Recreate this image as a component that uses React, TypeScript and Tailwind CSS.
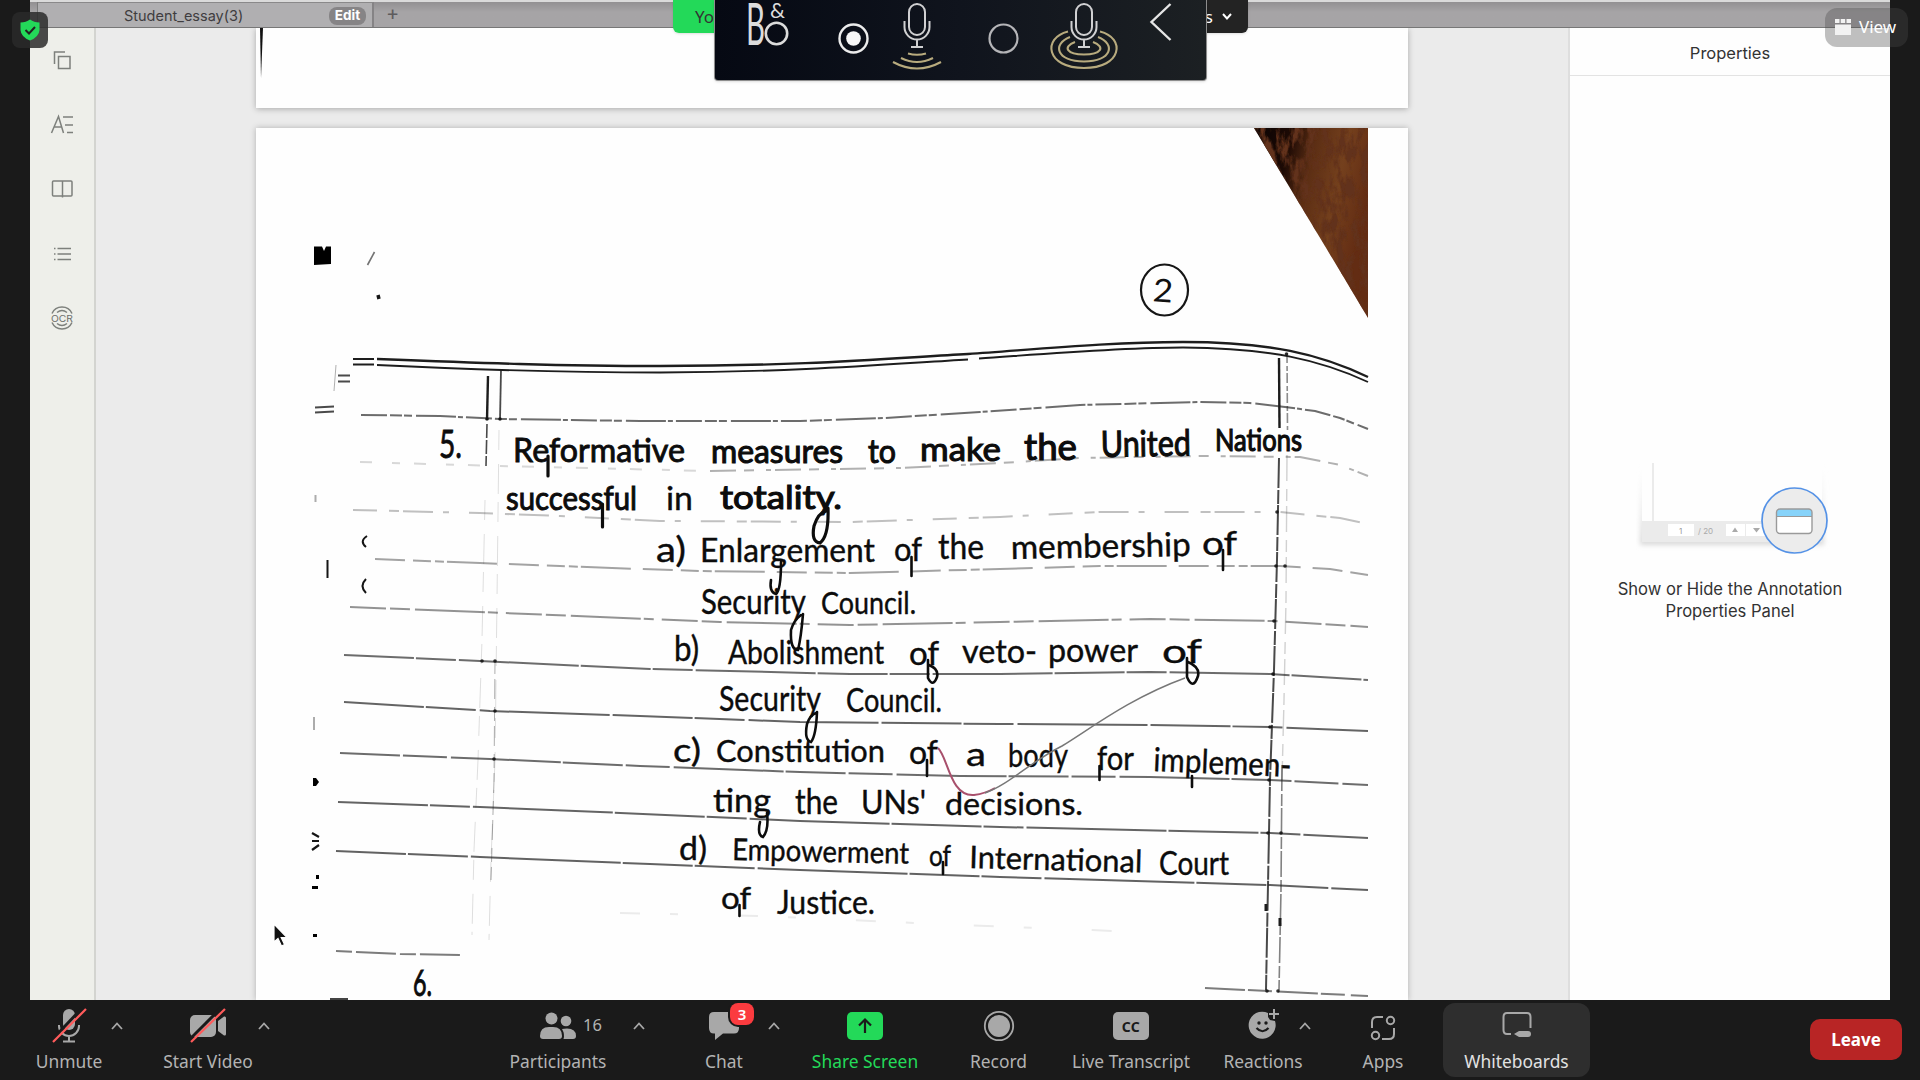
import React from 'react';

type Word = { t: string; x: number; y: number; w: number; s?: number; r?: number; b?: number };

/* The handwritten essay, word by word. */
const words: Word[] = [
  { t: '5.', x: 439, y: 458, w: 23, s: 38, b: 0.8 },
  { t: 'Reformative', x: 513, y: 462, w: 172, b: 0.9 },
  { t: 'measures', x: 711, y: 463, w: 132, b: 1.1 },
  { t: 'to', x: 868, y: 463, w: 28, b: 1.1 },
  { t: 'make', x: 920, y: 461, w: 81, b: 1.1 },
  { t: 'the', x: 1024, y: 460, w: 53, b: 1.2, s: 37 },
  { t: 'United', x: 1101, y: 457, w: 90, b: 1.1, r: -1, s: 36 },
  { t: 'Nations', x: 1215, y: 451, w: 87, b: 1.2, s: 30 },
  { t: 'successful', x: 506, y: 510, w: 131, b: 1 },
  { t: 'in', x: 666, y: 510, w: 27 },
  { t: 'totality.', x: 720, y: 509, w: 122, b: 1.2, s: 33 },
  { t: 'a)', x: 656, y: 562, w: 30, s: 35 },
  { t: 'Enlargement', x: 700, y: 562, w: 175 },
  { t: 'of', x: 894, y: 561, w: 28 },
  { t: 'the', x: 938, y: 559, w: 46, s: 34 },
  { t: 'membership', x: 1011, y: 559, w: 180, r: -1 },
  { t: 'of', x: 1202, y: 555, w: 35 },
  { t: 'Security', x: 701, y: 614, w: 105, s: 34 },
  { t: 'Council.', x: 821, y: 614, w: 95, s: 31 },
  { t: 'b)', x: 674, y: 661, w: 25, s: 34 },
  { t: 'Abolishment', x: 728, y: 664, w: 156 },
  { t: 'of', x: 909, y: 665, w: 30 },
  { t: 'veto-', x: 962, y: 663, w: 75 },
  { t: 'power', x: 1048, y: 662, w: 90 },
  { t: 'of', x: 1162, y: 663, w: 40 },
  { t: 'Security', x: 719, y: 711, w: 102, s: 34 },
  { t: 'Council.', x: 846, y: 712, w: 96, s: 32 },
  { t: 'c)', x: 673, y: 762, w: 28 },
  { t: 'Constitution', x: 716, y: 762, w: 169, s: 30 },
  { t: 'of', x: 909, y: 764, w: 29 },
  { t: 'a', x: 966, y: 766, w: 20 },
  { t: 'body', x: 1008, y: 767, w: 60 },
  { t: 'for', x: 1097, y: 770, w: 37 },
  { t: 'implemen-', x: 1153, y: 771, w: 138, r: 2.5 },
  { t: 'ting', x: 713, y: 812, w: 58 },
  { t: 'the', x: 795, y: 814, w: 43, s: 34 },
  { t: "UNs'", x: 861, y: 814, w: 65 },
  { t: 'decisions.', x: 945, y: 815, w: 138, s: 31 },
  { t: 'd)', x: 679, y: 860, w: 28 },
  { t: 'Empowerment', x: 732, y: 860, w: 177, s: 30, r: 1.2 },
  { t: 'of', x: 929, y: 866, w: 22, s: 28 },
  { t: 'International', x: 969, y: 868, w: 173, s: 31, r: 1.5 },
  { t: 'Court', x: 1159, y: 875, w: 70, s: 32 },
  { t: 'of', x: 721, y: 909, w: 30, s: 30 },
  { t: 'Justice.', x: 777, y: 914, w: 98, s: 33 },
  { t: '6.', x: 413, y: 996, w: 19, s: 36, b: 1 },
];

type Pt = [number, number];
const rules: { p: Pt[]; o: number; d: string }[] = [
  { o: 0.62, d: '26 3 12 2 8 4 40 2 5 3', p: [[361, 415], [440, 416], [500, 419], [640, 421], [800, 421], [885, 418], [980, 412], [1080, 405], [1200, 402], [1250, 403], [1285, 407], [1315, 411], [1340, 418], [1368, 429]] },
  { o: 0.16, d: '12 20 8 14', p: [[360, 462], [500, 466], [710, 471]] },
  { o: 0.32, d: '26 8 10 12 5 4', p: [[710, 471], [900, 468], [1000, 463], [1080, 458], [1200, 456], [1300, 457], [1340, 465], [1368, 476]] },
  { o: 0.26, d: '24 12 10 4 30 10 6 20', p: [[353, 510], [480, 513], [560, 516], [660, 521], [850, 522], [1000, 517], [1100, 512], [1280, 512], [1340, 518], [1368, 524]] },
  { o: 0.38, d: '30 8 18 4 9 3 50 12', p: [[375, 559], [480, 563], [560, 566], [640, 569], [700, 571], [850, 573], [1000, 569], [1100, 566], [1280, 566], [1330, 569], [1368, 575]] },
  { o: 0.45, d: '36 4 20 5 70 3 10 8', p: [[350, 607], [480, 612], [600, 617], [720, 622], [850, 625], [1000, 622], [1150, 619], [1275, 621], [1368, 627]] },
  { o: 0.62, d: '70 2 40 3 120 2', p: [[344, 655], [480, 661], [650, 669], [850, 674], [1000, 674], [1150, 672], [1270, 674], [1368, 680]] },
  { o: 0.65, d: '80 2 50 4 130 3', p: [[344, 702], [490, 711], [640, 716], [800, 722], [1000, 724], [1150, 725], [1270, 727], [1368, 731]] },
  { o: 0.62, d: '60 3 44 4 110 2', p: [[340, 753], [490, 759], [640, 766], [800, 772], [960, 776], [1150, 777], [1270, 780], [1368, 785]] },
  { o: 0.65, d: '90 2 40 3 140 2', p: [[338, 802], [480, 807], [600, 812], [800, 821], [1000, 827], [1270, 833], [1368, 838]] },
  { o: 0.66, d: '70 2 60 3 150 2', p: [[336, 851], [480, 857], [650, 864], [800, 870], [1000, 877], [1270, 885], [1368, 890]] },
  { o: 0.55, d: '16 4 40 4', p: [[336, 951], [400, 954], [460, 955]] },
  { o: 0.55, d: '40 3 24 6', p: [[1205, 988], [1268, 991], [1368, 996]] },
  { o: 0.08, d: '20 30 8 60', p: [[620, 913], [760, 916], [960, 925], [1140, 932]] },
];

function EssayScan() {
  return (
    <svg width="1152" height="872" viewBox="256 128 1152 872" className="block">
      <defs>
        <linearGradient id="desk" x1="0" y1="0" x2="1" y2="0.35">
          <stop offset="0" stopColor="#080303" />
          <stop offset="0.3" stopColor="#1d0a05" />
          <stop offset="0.5" stopColor="#5c2e14" />
          <stop offset="0.75" stopColor="#74401d" />
          <stop offset="1" stopColor="#632c13" />
        </linearGradient>
        <filter id="grain" x="0" y="0" width="1" height="1">
          <feTurbulence type="fractalNoise" baseFrequency="0.13 0.05" numOctaves="5" seed="7" />
          <feColorMatrix values="0 0 0 0 0.12  0 0 0 0 0.03  0 0 0 0 0.01  4 0 0 0 -1.6" />
          <feComposite in2="SourceGraphic" operator="in" />
        </filter>
      </defs>
      <path d="M1254 128H1368V318L1340 271L1305 213Z" fill="url(#desk)" />
      <path d="M1254 128H1368V318L1340 271L1305 213Z" filter="url(#grain)" />

      <g fill="none" stroke="#1d1d1d" strokeWidth="1.900">
        <path d="M353 359H374M353 364.500H374" />
        <path strokeWidth="2.400" d="M377 359C480 363 560 366 660 366C800 366 880 359 968 354C1040 349 1110 342 1183 342C1270 342 1320 354 1368 377" />
        <path d="M377 365C480 370 560 372.500 660 372.500C800 372 890 364 968 359.500M979 358.500C1050 353.500 1120 347.500 1183 347.500C1270 348 1320 360 1368 382" />
        <path strokeWidth="1.800" opacity=".8" d="M338 375.500H350M338 381.500H350M315 407.500L334 406.500M315 412.500L334 411.500" />
        <path strokeWidth="1" opacity=".35" d="M336 365L334 391" />
      </g>

      {rules.map((l, i) => (
        <polyline key={i} points={l.p.map((q) => q.join(',')).join(' ')} fill="none" stroke="#111" strokeWidth="2" strokeDasharray={l.d} opacity={l.o} strokeLinejoin="round" />
      ))}

      <g fill="none" stroke="#1c1c1c">
        <path strokeWidth="2.400" d="M488 376L487 420" />
        <path strokeWidth="1.600" opacity=".8" strokeDasharray="14 2" d="M487 424L486 466" />
        <path strokeWidth="1.800" opacity=".8" d="M501 370L500 420" />
        <path opacity=".14" strokeDasharray="20 14 30 8" d="M485 500L482 640L478 760L474 850L472 935M499 430L497 600L495 760L491 860L489 940" />
        <path opacity=".45" strokeDasharray="14 5 20 8" d="M495 660L494 780L491 880" strokeWidth=".8" />
        <path strokeWidth="2.400" d="M1279 358L1279.500 428" />
        <path strokeWidth="2" opacity=".8" strokeDasharray="30 2 14 1" d="M1279 458L1277 560L1274 670L1270 780L1268 885L1266 990" />
        <path strokeWidth="1.600" opacity=".5" strokeDasharray="10 3 5 2" d="M1287 353L1287.500 430" />
        <path strokeWidth="1.400" opacity=".2" strokeDasharray="26 8 12 5" d="M1287 455L1286 600L1284 700L1282 780" />
        <path strokeWidth="1.600" opacity=".55" strokeDasharray="26 3 12 2" d="M1282 765L1281 890L1279 990" />
        <path strokeWidth="3" d="M1280 918V926M1266 904V911" />
      </g>
      {[[1286.5, 354], [487, 419], [500, 419], [1277, 512], [1276, 566], [1285, 566], [1274, 621], [1273, 674], [482, 661], [495, 661], [495, 711], [494, 759], [1270, 727], [1269, 780], [1268, 833], [1281, 833], [1267, 991], [1278, 991]].map(([x, y], i) => (
        <circle key={i} cx={x} cy={y} r="1.800" fill="#111" opacity=".85" />
      ))}

      {/* margin specks */}
      <g fill="none" stroke="#151515" strokeWidth="2">
        <path fill="#000" stroke="none" d="M314 246.500H322L324 251L326 246.500H331V264L314 265Z" />
        <path strokeWidth="1.600" opacity=".6" d="M374.500 252L367.500 265" />
        <path strokeWidth="3.500" d="M378 295L379 299" />
        <path d="M367 536Q359 541 366 547M366 579Q359 586 366 593M327.500 560V578" />
        <path opacity=".35" d="M315.500 495V502M314 717V730" />
        <path strokeWidth="2.200" d="M312 833L319 837M312 841H319M312 850L319 845" />
        <path fill="#000" stroke="none" d="M313 778H316L319 782L316 786H313ZM312 886H318V889H312ZM316 875H319V879H316ZM313 934H317V937H313Z" />
        <path opacity=".8" d="M330 999H348" />
      </g>

      {/* page number */}
      <ellipse cx="1164.500" cy="290" rx="23.500" ry="25.500" fill="none" stroke="#161616" strokeWidth="2.200" />
      <text x="1153" y="302" fontSize="32" textLength="20" lengthAdjust="spacingAndGlyphs" fill="#111" transform="rotate(4 1164 290)" style={{ fontFamily: 'Lato, sans-serif' }}>2</text>

      {/* pen flourishes below the baselines */}
      <g fill="none" stroke="#0c0c0c" strokeWidth="2.600" strokeLinecap="round">
        <path strokeWidth="3.200" d="M828 508Q829 536 820 543Q811 542 814 526Q818 513 826 511" />
        <path d="M548 456V476M602.500 504V527" strokeWidth="3.200" />
        <path d="M781 562Q781 590 776 594Q769 592 771 580" />
        <path d="M803 614Q801 638 798 650Q790 650 791 630Q794 620 801 615" />
        <path d="M817 712Q816 736 811 742Q804 740 807 724Q810 715 816 713" />
        <path d="M767 813Q769 830 763 837Q757 835 760 822" />
        <path d="M928 660V678Q933 688 937 677Q939 669 929 665M1187 658V677Q1193 691 1198 676Q1200 667 1188 662" />
        <path d="M911.500 557V576M1223 550V570M927 760V776M1099.500 766V780M943 862V874M739.500 905V916M1192 776V787" />
      </g>

      {words.map((w, i) => (
        <text
          key={i}
          x={w.x}
          y={w.y}
          fontSize={w.s ?? 33}
          textLength={w.w}
          lengthAdjust="spacingAndGlyphs"
          fill="#0c0c0c"
          stroke="#0c0c0c"
          strokeWidth={w.b ?? 0.4}
          transform={`rotate(${w.r ?? 0} ${w.x} ${w.y})`}
          style={{ fontFamily: 'Lato, "Open Sans", sans-serif' }}
        >
          {w.t}
        </text>
      ))}

      {/* tick mark */}
      <path d="M938 748C948 757 950 797 974 795C982 794 988 792 995 788" fill="none" stroke="#a8506c" strokeWidth="2" />
      <path d="M985 793C1010 784 1030 762 1062 746C1090 729 1130 698 1185 678" fill="none" stroke="#777" strokeWidth="1.500" />
    </svg>
  );
}

function Caret({ className = '' }: { className?: string }) {
  return (
    <div className={`flex h-full w-5 justify-center pt-[22px] ${className}`}>
      <svg width="12" height="8" viewBox="0 0 12 8" fill="none" stroke="#a8a8a8" strokeWidth="1.800">
        <path d="M1 7L6 1.500L11 7" />
      </svg>
    </div>
  );
}

function Tool({ label, className, color = 'text-[#b3b3b3]', children }: { label: string; className: string; color?: string; children: React.ReactNode }) {
  return (
    <div className={`flex h-full flex-col items-center pt-[6px] ${color} ${className}`}>
      <div className="flex h-10 items-center justify-center">{children}</div>
      <span className="mt-[2px] whitespace-nowrap text-[17.400px] leading-[26px]">{label}</span>
    </div>
  );
}

function Toolbar() {
  return (
    <div className="flex h-20 items-start bg-[#1a1a1a] pl-[31px] font-['Noto_Sans',sans-serif]">
      <Tool label="Unmute" className="w-[76px]">
        <svg width="36" height="40" viewBox="0 0 36 40" fill="none">
          <rect x="12" y="3" width="12" height="21" rx="6" fill="#a8a8a8" />
          <path d="M8 19V20A10 10 0 0 0 28 20V19M18 30V35M12 35.500H24" stroke="#a8a8a8" strokeWidth="2" />
          <path d="M1 34L32 1" stroke="#1a1a1a" strokeWidth="3" />
          <path d="M2 36L35 3" stroke="#ff5b5b" strokeWidth="2.200" />
        </svg>
      </Tool>
      <Caret />
      <Tool label="Start Video" className="ml-[35px] w-[92px]">
        <svg width="38" height="40" viewBox="0 0 38 40" fill="none">
          <rect x="1" y="9" width="26" height="22" rx="5" fill="#a8a8a8" />
          <path d="M29 15L35 10.500Q37 10 37 12V28Q37 30 35 29.500L29 25Z" fill="#a8a8a8" />
          <path d="M0 34L33 1" stroke="#1a1a1a" strokeWidth="3" />
          <path d="M2 36L36 3" stroke="#ff5b5b" strokeWidth="2.200" />
        </svg>
      </Tool>
      <Caret />
      <Tool label="Participants" className="ml-[213px] w-[142px]">
        <div className="relative">
          <svg width="36" height="28" viewBox="0 0 36 28" fill="#a8a8a8">
            <circle cx="11.500" cy="6.500" r="6" />
            <path d="M0 24Q0 15 9 15H13Q22 15 22 24Q22 27 19 27H3Q0 27 0 24Z" />
            <circle cx="26" cy="9" r="5.300" />
            <path d="M22 17Q24 16.500 27 16.500Q36 16.500 36 24Q36 27 33 27H23.500Q25 22 22 17Z" />
          </svg>
          <span className="absolute top-0 left-[43px] text-[16.500px] leading-[26px]">16</span>
        </div>
      </Tool>
      <Caret />
      <Tool label="Chat" className="ml-[35px] w-20">
        <div className="relative">
          <svg width="30" height="28" viewBox="0 0 30 28" fill="#a8a8a8">
            <path d="M5 0H25Q30 0 30 5V16Q30 21.500 25 21.500H14L6 28V21.500H5Q0 21.500 0 16V5Q0 0 5 0Z" />
          </svg>
          <span className="absolute -top-[9px] left-[21px] flex h-[22px] w-6 items-center justify-center rounded-lg bg-[#fb3b3f] text-[15px] font-semibold text-white ring-2 ring-[#1a1a1a]">3</span>
        </div>
      </Tool>
      <Caret />
      <Tool label="Share Screen" className="ml-4 w-[130px]" color="text-[#23d959]">
        <svg width="36" height="28" viewBox="0 0 36 28" fill="none">
          <rect width="36" height="28" rx="5" fill="#23d959" />
          <path d="M18 21V8M12 13.500L18 7.500L24 13.500" stroke="#1a1a1a" strokeWidth="2.200" />
        </svg>
      </Tool>
      <Tool label="Record" className="w-[137px]">
        <svg width="32" height="32" viewBox="0 0 32 32">
          <circle cx="16" cy="16" r="14.200" fill="none" stroke="#a8a8a8" strokeWidth="1.800" />
          <circle cx="16" cy="16" r="11" fill="#a8a8a8" />
        </svg>
      </Tool>
      <Tool label="Live Transcript" className="w-32">
        <span className="flex h-7 w-9 items-center justify-center rounded-[5px] bg-[#a8a8a8] text-[14px] font-bold tracking-wide text-[#1a1a1a]">CC</span>
      </Tool>
      <Tool label="Reactions" className="ml-9 w-16">
        <svg width="34" height="32" viewBox="0 0 34 32" fill="none" className="relative top-[-2px]">
          <path d="M22 5A13.500 13.500 0 1 0 29 13L24 12L22 9Z" fill="#a8a8a8" />
          <circle cx="13" cy="15" r="1.700" fill="#1a1a1a" />
          <circle cx="20" cy="15" r="1.700" fill="#1a1a1a" />
          <path d="M10.500 20Q16.500 26.500 22.500 20" stroke="#1a1a1a" strokeWidth="2.200" />
          <path d="M28 1V11M23 6H33" stroke="#a8a8a8" strokeWidth="2" />
        </svg>
      </Tool>
      <Caret />
      <Tool label="Apps" className="ml-7 w-20">
        <svg width="26" height="26" viewBox="0 0 26 26" fill="none" stroke="#a8a8a8" strokeWidth="2" className="relative top-[2px]">
          <path d="M13 2H7Q2 2 2 7V13M12 24H19Q24 24 24 19V13" />
          <circle cx="20.500" cy="5.500" r="3.700" />
          <circle cx="5.500" cy="20.500" r="3.700" />
        </svg>
      </Tool>
      <div className="ml-5 mt-[3px] h-[74px] w-[147px] rounded-xl bg-[#2e2e2e]">
        <div className="-mt-[3px]">
          <Tool label="Whiteboards" className="w-full" color="text-[#e2e2e2]">
            <svg width="30" height="26" viewBox="0 0 30 26" fill="none" className="relative top-[-1px]">
              <path d="M9 22H5Q1.500 22 1.500 18V5Q1.500 1 5 1H25Q28.500 1 28.500 5V16" stroke="#a8a8a8" strokeWidth="2" />
              <path d="M12 22L17 19H26Q29 19 29 22T26 25H17Z" fill="#a8a8a8" />
            </svg>
          </Tool>
        </div>
      </div>
      <button className="ml-auto mr-[18px] mt-[19px] h-[41px] w-[92px] rounded-[10px] bg-[#b82525] text-[17px] font-bold text-white">Leave</button>
    </div>
  );
}

function SideRail() {
  const s = { fill: 'none', stroke: '#7d807c', strokeWidth: 1.5 };
  return (
    <div className="flex w-[66px] flex-col items-center gap-[40.600px] border-r-2 border-[#d3d4d0] bg-[#eeefea] pt-[20px]">
      <svg width="24" height="24" viewBox="0 0 24 24" {...s}><path d="M4.500 16V4H15M8.500 8.500H20V20.500H8.500Z" /></svg>
      <svg width="24" height="24" viewBox="0 0 24 24" {...s}><path d="M1.500 20L8.500 3.500L13.500 20M4.500 14H12M13 4H23M15 12H23M17 19.500H23" /></svg>
      <svg width="24" height="24" viewBox="0 0 24 24" {...s}><rect x="2.500" y="4" width="19.500" height="15" rx="1" /><path d="M12.500 4V20.500" /></svg>
      <svg width="24" height="24" viewBox="0 0 24 24" {...s} strokeWidth="1.600"><path d="M7.500 6.500H21M7.500 12H21M7.500 17.500H21M4 6.500H5.500M4 12H5.500M4 17.500H5.500" /></svg>
      <svg width="24" height="24" viewBox="0 0 24 24" {...s}>
        <path d="M2 7.500A11 11 0 0 1 22 7.500M2 16.500A11 11 0 0 0 22 16.500M7 6.500Q12 2.500 17 6.500M7 17.500Q12 21.500 17 17.500" />
        <text x="1" y="15.500" fontSize="9.500" textLength="22" lengthAdjust="spacingAndGlyphs" fill="#6d706c" stroke="none" style={{ fontFamily: 'Inter, sans-serif' }}>OCR</text>
      </svg>
    </div>
  );
}

function PropertiesPanel() {
  return (
    <div className="flex w-[322px] flex-col border-l-2 border-[#dedede] bg-[#fefefe] font-['Inter',sans-serif] text-[#333]">
      <div className="flex h-12 items-center justify-center border-b border-[#e3e3e3] pt-1 text-[16.500px]">
        Properties
      </div>
      <svg width="196" height="100" viewBox="1636 456 196 100" className="ml-[66px] mt-[380px] block">
        <defs>
          <filter id="soft" x="-10%" y="-10%" width="120%" height="125%"><feGaussianBlur stdDeviation="2.500" /></filter>
          <linearGradient id="fade" x1="0" y1="0" x2="0" y2="1">
            <stop offset="0" stopColor="#eee" stopOpacity="0" />
            <stop offset="1" stopColor="#d8d8d8" />
          </linearGradient>
        </defs>
        <rect x="1640" y="466" width="184" height="79" fill="url(#fade)" filter="url(#soft)" />
        <rect x="1642" y="462" width="180" height="80" fill="#fefefe" />
        <path d="M1653 463V521" stroke="#e4e4e4" strokeWidth="1.500" />
        <rect x="1642" y="521" width="180" height="21" fill="#ebebeb" />
        <path d="M1668 524H1694V536H1668ZM1726 524H1745V536H1726ZM1746 524H1766V536H1746Z" fill="#fff" />
        <text x="1679" y="534" fontSize="8" fill="#999" style={{ fontFamily: 'Inter, sans-serif' }}>1</text>
        <text x="1698" y="534" fontSize="8" fill="#aaa" style={{ fontFamily: 'Inter, sans-serif' }}>/ 20</text>
        <path d="M1732 532L1735 527.500L1738 532ZM1753 528L1756.500 532.500L1760 528Z" fill="#aaa" />
        <circle cx="1794.500" cy="520.500" r="32.500" fill="#ececec" stroke="#5592e6" strokeWidth="1.700" />
        <rect x="1776.500" y="509" width="35.500" height="24.500" rx="3.500" fill="#fff" />
        <path d="M1776.500 516.500V512.500Q1776.500 509 1780 509H1808.500Q1812 509 1812 512.500V516.500Z" fill="#87d3fa" />
        <path d="M1776.500 516.500H1812" stroke="#999" />
        <rect x="1776.500" y="509" width="35.500" height="24.500" rx="3.500" fill="none" stroke="#9a9a9a" strokeWidth="1.400" />
      </svg>
      <p className="mt-[22px] text-center text-[16.600px] leading-[22px]">
        Show or Hide the Annotation<br />Properties Panel
      </p>
    </div>
  );
}

function MicOverlay() {
  return (
    <div className="absolute left-[714px] top-0 h-[81px] w-[493px] rounded-b-[4px] border border-t-0 border-[#8d8d8d] bg-gradient-to-r from-[#060913] via-[#10141d] to-[#1c2023] shadow">
      <svg width="491" height="80" viewBox="715 0 491 80" fill="none" className="block">
        <g fill="#dcdcdc" style={{ fontFamily: 'Lato, sans-serif' }}>
          <text x="746" y="45" fontSize="59" textLength="19" lengthAdjust="spacingAndGlyphs">B</text>
          <text x="770" y="18" fontSize="21" textLength="15" lengthAdjust="spacingAndGlyphs">&amp;</text>
        </g>
        <circle cx="776.500" cy="33.500" r="10.700" stroke="#dcdcdc" strokeWidth="2.600" />
        <circle cx="853.500" cy="38.500" r="14" stroke="#ececec" strokeWidth="2.400" />
        <circle cx="853.500" cy="38.500" r="7.300" fill="#f7f7f7" />
        <circle cx="1003.500" cy="38.500" r="14" stroke="#b5b5b8" strokeWidth="2.200" />
        {[917, 1084].map((x) => (
          <g key={x} stroke="#d0d0d2" strokeWidth="2" transform={`translate(${x} 0)`}>
            <rect x="-8" y="4" width="16" height="31" rx="8" />
            <path d="M-12.500 21V27A12.500 12.500 0 0 0 12.500 27V21M0 40V47M-6 47H6" />
          </g>
        ))}
        <g stroke="#b8ab7e" strokeWidth="2.100">
          <path d="M908 53.500Q917 56 926 53.500M901 58Q917 66 933 58M893 62Q917 75 941 62" />
          <path d="M1068 31.500C1042 38 1046 68 1084 68S1126 38 1100 31.500M1070 37C1052 44 1056 61.500 1084 61.500S1116 44 1098 37M1075 42C1062 47 1067 54.500 1084 54.500S1106 47 1093 42" />
        </g>
        <path d="M1170.500 4L1151.500 22L1170.500 40" stroke="#e5e5e5" strokeWidth="2.400" />
      </svg>
    </div>
  );
}

export default function App() {
  return (
    <div className="relative h-[1080px] w-[1920px] overflow-hidden bg-[#1a1a1a]">
      <div className="mx-[30px] flex h-[1000px] flex-col bg-[#ebebeb]">
        <div className="flex h-7 border-b border-t-2 border-b-[#777] border-t-[#dadada] bg-gradient-to-b from-[#929092] to-[#a6a4a6] to-40% font-['Inter',sans-serif]">
          <div className="w-2 border-r border-[#7b7b7b]" />
          <div className="flex w-[336px] items-center border-r-2 border-t border-r-[#858385] border-t-[#8a898a] bg-[#b0afb1] pl-[86px] pt-px text-[14.500px] text-[#3f3d3f]">
            <span className="w-[120px]">Student_essay(3)</span>
            <span className="ml-[85px] flex h-[18px] w-[37px] items-center justify-center rounded-lg bg-[#868486] text-[13.500px] font-bold text-white">Edit</span>
          </div>
          <span className="ml-[12px] text-[20px] leading-[22px] text-[#5d5b5d]">+</span>
        </div>
        <div className="flex min-h-0 flex-1">
          <SideRail />
          <div className="flex flex-1 justify-start overflow-hidden pl-[160px]">
            <div className="w-[1152px]">
              <div className="h-20 bg-[#fefefe] shadow-[0_1px_6px_rgba(0,0,0,0.28)]">
                <svg width="8" height="54" viewBox="0 0 8 54" className="ml-[2px] block"><path d="M2 0H5L3 50Z" fill="#111" /></svg>
              </div>
              <div className="mt-5 h-[872px] bg-[#fefefe] shadow-[0_0_6px_rgba(0,0,0,0.25)]">
                <EssayScan />
              </div>
            </div>
          </div>
          <PropertiesPanel />
        </div>
      </div>
      <Toolbar />

      {/* sharing banner, partly covered by the microphone widget */}
      <div className="absolute left-[673px] top-0 flex h-[33px] w-[575px] justify-between overflow-hidden rounded-b-md font-['Noto_Sans',sans-serif] text-[17px] leading-[34px] shadow">
        <div className="w-[300px] bg-[#23d959] pl-[22px] text-[#333]">You are viewing</div>
        <div className="flex flex-1 items-center justify-end bg-[#232323] pr-[16px] text-white">
          <span className="mr-[9px]">Options</span>
          <svg width="10" height="7" viewBox="0 0 10 7" fill="none" stroke="#fff" strokeWidth="2"><path d="M1 1L5 5.500L9 1" /></svg>
        </div>
      </div>
      <MicOverlay />

      <div className="absolute left-3 top-3 flex h-9 w-9 items-center justify-center rounded-lg bg-[#2a2a2a]/85">
        <svg width="20" height="22" viewBox="0 0 20 22"><path d="M10 0.500Q14 3.500 19.500 3.500V11Q19 18 10 21.500Q1 18 0.500 11V3.500Q6 3.500 10 0.500Z" fill="#23d959" /><path d="M5.500 11L9 14.500L15 8" fill="none" stroke="#222" strokeWidth="2" /></svg>
      </div>
      <div className="absolute left-[1825px] top-2 flex h-[39px] w-[83px] items-center rounded-xl bg-[#4a4a4a]/35 pb-[2px] pl-[10px] font-['Noto_Sans',sans-serif] text-[17px] text-white">
        <svg width="16" height="16" viewBox="0 0 16 16" fill="#f2f2f2" className="mr-2"><path d="M0 0H4.500V4H0ZM5.700 0H10.200V4H5.700ZM11.500 0H16V4H11.500ZM0 5.500H16V16H0Z" /></svg>
        View
      </div>

      {/* mouse pointer */}
      <svg width="16" height="24" viewBox="0 0 16 24" className="absolute left-[273px] top-[923px]"><path d="M1 1V19L5 15.500L8.500 23L11.500 21.500L8.200 14.500H14Z" fill="#111" stroke="#fff" strokeWidth="1.200" /></svg>
    </div>
  );
}
